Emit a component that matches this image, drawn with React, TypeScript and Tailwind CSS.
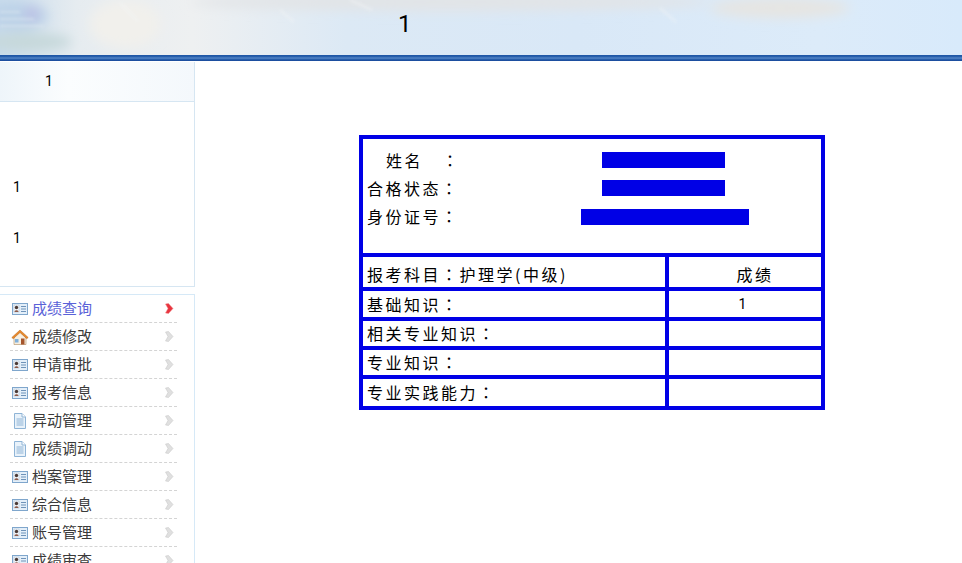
import React from "react";

const menuItems = [
  { label: "成绩查询", icon: "card", active: true },
  { label: "成绩修改", icon: "home" },
  { label: "申请审批", icon: "card" },
  { label: "报考信息", icon: "card" },
  { label: "异动管理", icon: "doc" },
  { label: "成绩调动", icon: "doc" },
  { label: "档案管理", icon: "card" },
  { label: "综合信息", icon: "card" },
  { label: "账号管理", icon: "card" },
  { label: "成绩审查", icon: "card" },
];

const CardIcon = () => (
  <svg width="16" height="12" viewBox="0 0 16 12" className="shrink-0">
    <rect x="0.5" y="0.5" width="15" height="11" fill="#e4eff9" stroke="#7fa6cc" />
    <rect x="2" y="2" width="5" height="7" fill="#f3f6fa" stroke="#a8bcd0" strokeWidth="0.5" />
    <circle cx="4.5" cy="4.5" r="1.7" fill="#4a3a36" />
    <path d="M2.5 9 C2.5 6.5 6.5 6.5 6.5 9 Z" fill="#8c5a4a" />
    <path d="M9 3.5h5M9 6h5M9 8.5h5" stroke="#6f93b8" strokeWidth="1" />
  </svg>
);

const HomeIcon = () => (
  <svg width="18" height="16" viewBox="0 0 18 16" className="shrink-0">
    <path d="M3 8v7.5h12V8L9 3z" fill="#f6efe2" stroke="#b08a5c" strokeWidth="0.6" />
    <path d="M0.8 8.5 9 1l8.2 7.5-1.4 1.2L9 3.6 2.2 9.7z" fill="#e98a2b" stroke="#b9651a" strokeWidth="0.5" />
    <rect x="4" y="10" width="3.5" height="3.5" fill="#7fb0dc" />
    <rect x="10" y="9.5" width="3.5" height="6" fill="#a5552c" />
  </svg>
);

const DocIcon = () => (
  <svg width="12" height="16" viewBox="0 0 12 16" className="shrink-0">
    <path d="M0.5 0.5h7.5l3.5 3.5v11.5h-11z" fill="#e9f2fa" stroke="#8fb4d6" />
    <path d="M8 0.5v3.5h3.5" fill="#ffffff" stroke="#8fb4d6" />
    <path d="M2.5 6h7M2.5 8h7M2.5 10h7M2.5 12h7" stroke="#8fb4d6" strokeWidth="1" />
  </svg>
);

const Arrow = ({ active }: { active?: boolean }) => (
  <svg width="9" height="11" viewBox="0 0 9 11" className="shrink-0">
    <path
      d="M0.5 1 3.5 0.5 8 5.5 3.5 10.5 0.5 10 3 5.5z"
      fill={active ? "#e8343f" : "#e0e0e0"}
      stroke={active ? "#f08a8a" : "#c4c4c4"}
      strokeWidth="0.5"
    />
  </svg>
);

const Redacted = ({ className }: { className: string }) => <div className={`h-4 bg-[#0000e6] ${className}`} />;

// the colon sits in the middle of its cell in the picture, the TC face draws it that way
const Label = ({ text }: { text: string }) => (
  <>
    {text.split("：").map((part, i) => (
      <React.Fragment key={i}>
        {i > 0 && <span className="font-['Noto_Sans_CJK_TC',sans-serif]">：</span>}
        {part}
      </React.Fragment>
    ))}
  </>
);

const ScoreRow = ({
  label,
  height,
  labelClass = "",
  score,
  scoreClass = "pr-[5px] text-sm font-['Roboto',sans-serif]",
}: {
  label: string;
  height: string;
  labelClass?: string;
  score?: string;
  scoreClass?: string;
}) => (
  <div className={`flex border-t-4 border-[#0000e6] ${height}`}>
    <div className={`w-[306px] shrink-0 border-r-4 border-[#0000e6] pl-1 flex items-center text-base tracking-[2.5px] ${labelClass}`}>
      <span>
        <Label text={label} />
      </span>
    </div>
    <div className={`flex-1 flex items-center justify-center ${scoreClass}`}>{score}</div>
  </div>
);

export default function App() {
  return (
    <div className="w-[962px] h-[563px] overflow-hidden bg-white font-['Noto_Sans_CJK_SC','Liberation_Sans',sans-serif] text-black flex flex-col">
      {/* banner */}
      <div className="relative h-[55px] shrink-0 overflow-hidden bg-[linear-gradient(90deg,#c9dcec_0%,#e6ecf0_8%,#eef0f1_20%,#dce9f5_36%,#d9e8f7_60%,#dcebf9_85%,#d8eafb_100%)]">
        <svg className="absolute left-0 top-0" width="962" height="55" viewBox="0 0 962 55">
          <defs>
            <filter id="soft" x="-30%" y="-60%" width="160%" height="220%">
              <feGaussianBlur stdDeviation="6" />
            </filter>
            <filter id="softer" x="-10%" y="-60%" width="120%" height="220%">
              <feGaussianBlur stdDeviation="1.5" />
            </filter>
          </defs>
          <g filter="url(#soft)">
            <ellipse cx="450" cy="2" rx="260" ry="9" fill="#e2e4e6" />
            <ellipse cx="780" cy="8" rx="70" ry="10" fill="#e6e5e2" />
            <ellipse cx="18" cy="16" rx="30" ry="14" fill="#bcd2e8" />
            <ellipse cx="32" cy="14" rx="7" ry="6" fill="#bdbbe4" />
            <ellipse cx="28" cy="42" rx="44" ry="9" fill="#c6d8da" />
            <ellipse cx="125" cy="24" rx="36" ry="24" fill="#f1f0ec" />
          </g>
          <g filter="url(#softer)" opacity="0.5">
            <path d="M0 12h20M0 19h34M0 26h44" stroke="#e4edf2" strokeWidth="2" />
            <path d="M120 3l18 18M280 10l14 12M350 0l22 10M660 8l16 14" stroke="#f4f6f7" strokeWidth="2" />
          </g>
        </svg>
        <span className="absolute left-[398px] top-[8px] text-2xl font-['Roboto',sans-serif]">1</span>
      </div>
      <div className="h-[6px] shrink-0 bg-[linear-gradient(180deg,#1c53a4_0%,#2a62ae_33%,#5c8ccb_50%,#2a62ae_70%,#17479a_100%)]" />

      <div className="flex flex-1 min-h-0">
        {/* sidebar */}
        <aside className="w-[195px] shrink-0 flex flex-col pt-px">
          <div className="h-[40px] shrink-0 border-r border-b border-[#d6e6f2] bg-[linear-gradient(90deg,#eef5fa_0%,#fbfdfe_35%,#f4f8fc_100%)] flex items-center pl-[45px] pb-[2px] text-sm font-['Roboto',sans-serif]">
            1
          </div>
          <div className="h-[185px] shrink-0 border-r border-b border-[#d6e6f2] font-['Roboto',sans-serif] text-sm pl-[13px] pt-[75px]">
            <div className="leading-5">1</div>
            <div className="leading-5 mt-[31px]">1</div>
          </div>
          <nav className="mt-[7px] flex-1 min-h-0 overflow-hidden border-t border-r border-[#d6e9f7] pl-[10px] pr-[17px]">
            {menuItems.map((item) => (
              <div key={item.label} className="h-[28px] shrink-0 flex items-center border-b border-dashed border-[#d4d4d4]">
                <span className="w-[22px] shrink-0 flex justify-center -translate-x-[1px]">
                  {item.icon === "card" && <CardIcon />}
                  {item.icon === "home" && <HomeIcon />}
                  {item.icon === "doc" && <DocIcon />}
                </span>
                <span className={`text-[15px] flex-1 ${item.active ? "text-[#5a62d8]" : "text-[#3a3a3a]"}`}>{item.label}</span>
                <Arrow active={item.active} />
                <span className="w-[3px]" />
              </div>
            ))}
          </nav>
        </aside>

        {/* content */}
        <main className="flex-1 pl-[164px] pt-[74px]">
          <div className="w-[466px] border-4 border-[#0000e6]">
            <div className="h-[114px] pt-[13px] flex flex-col gap-3 text-base">
              <div className="h-4 flex items-center">
                <div className="w-[218px] flex items-center pl-[23px] tracking-[2.5px]">
                  <span>姓名</span>
                  <span className="ml-[19px] font-['Noto_Sans_CJK_TC',sans-serif]">：</span>
                </div>
                <Redacted className="w-[123px] ml-[21px]" />
              </div>
              <div className="h-4 flex items-center">
                <div className="w-[218px] pl-1 tracking-[2.5px]">
                  <Label text="合格状态：" />
                </div>
                <Redacted className="w-[123px] ml-[21px]" />
              </div>
              <div className="h-4 flex items-center mt-px">
                <div className="w-[218px] pl-1 pb-[2px] tracking-[2.5px]">
                  <Label text="身份证号：" />
                </div>
                <Redacted className="w-[168px]" />
              </div>
            </div>
            <ScoreRow
              label="报考科目：护理学(中级)"
              height="h-[34px]"
              labelClass="pt-[3px]"
              score="成绩"
              scoreClass="pl-[20px] pt-[3px] text-base tracking-[2.5px]"
            />
            <ScoreRow label="基础知识：" height="h-[30px]" score="1" />
            <ScoreRow label="相关专业知识：" height="h-[29px]" labelClass="pb-[2px]" />
            <ScoreRow label="专业知识：" height="h-[29px]" labelClass="pb-[2px]" />
            <ScoreRow label="专业实践能力：" height="h-[31px]" labelClass="pb-[2px]" />
          </div>
        </main>
      </div>
    </div>
  );
}
